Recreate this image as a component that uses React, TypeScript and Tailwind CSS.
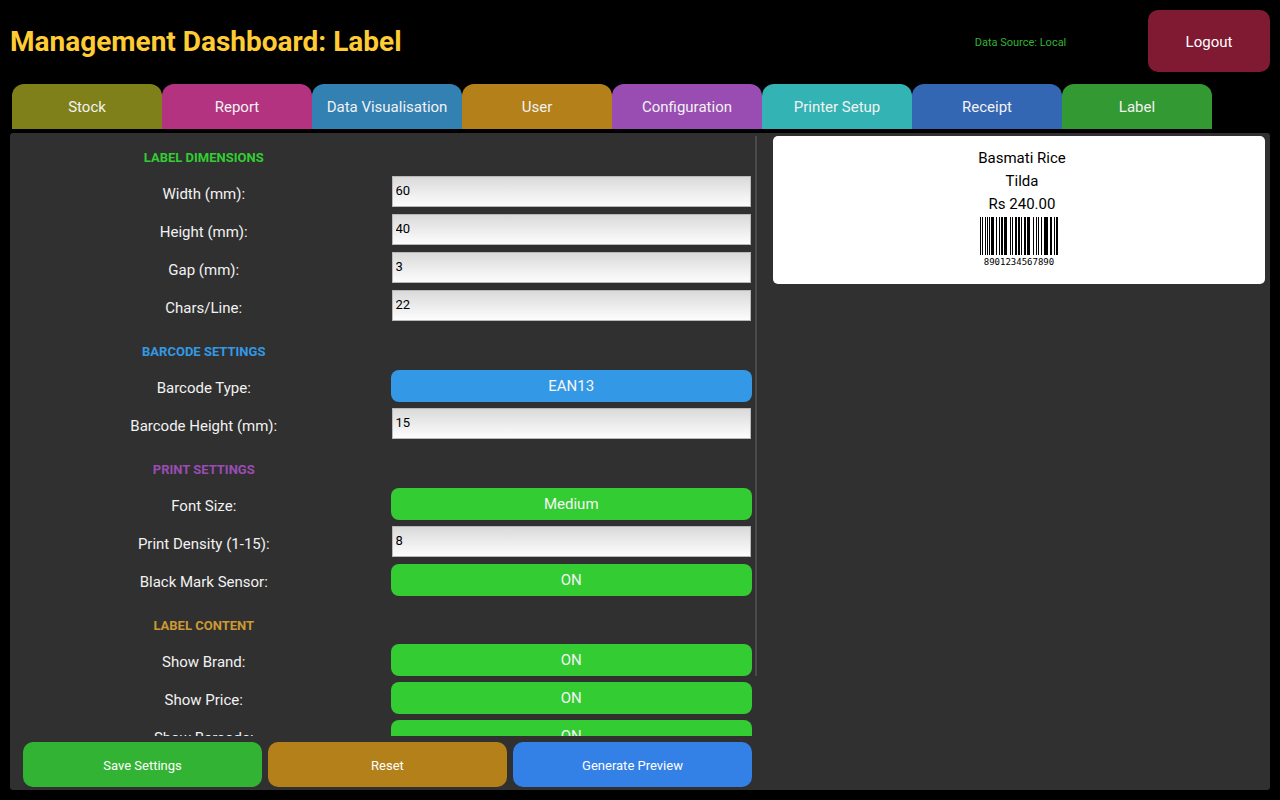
import { useId, useState } from "react";

const tabs = [
    { name: "Stock", color: "bg-[#80801a]" },
    { name: "Report", color: "bg-[#b33380]" },
    { name: "Data Visualisation", color: "bg-[#3380b3]" },
    { name: "User", color: "bg-[#b3801a]" },
    { name: "Configuration", color: "bg-[#994db3]" },
    { name: "Printer Setup", color: "bg-[#33b3b3]" },
    { name: "Receipt", color: "bg-[#3366b3]" },
    { name: "Label", color: "bg-[#339933]" },
];

const SectionTitle = ({ color, children }: { color: string; children: string }) => (
    <div className="grid h-12 grid-cols-2 gap-[6px] pt-3 first:h-10 first:pt-1">
        <h2 className={`flex items-center justify-center text-[13px] font-bold ${color}`}>{children}</h2>
    </div>
);

const Rows = ({ children }: { children: React.ReactNode }) => (
    <div className="flex flex-col gap-[6px]">{children}</div>
);

const Row = ({ id, label, children }: { id: string; label: string; children: React.ReactNode }) => (
    <div className="grid h-8 grid-cols-2 gap-[6px]">
        <label htmlFor={id} className="flex items-center justify-center pt-[5px] text-[15px] text-[#f2f2f2]">
            {label}
        </label>
        {children}
    </div>
);

const TextRow = ({ label, initial }: { label: string; initial: string }) => {
    const id = useId();
    const [value, setValue] = useState(initial);
    return (
        <Row id={id} label={label}>
            <input
                id={id}
                value={value}
                onChange={(e) => setValue(e.target.value)}
                className="mx-px h-[31px] min-w-0 border border-[#b8b8b8] bg-linear-to-b from-[#dadada] to-[#fdfdfd] pb-[2px] pl-[3px] text-[13px] text-black outline-none"
            />
        </Row>
    );
};

const SelectRow = ({
    label,
    options,
    initial,
    color,
}: {
    label: string;
    options: string[];
    initial: string;
    color: string;
}) => {
    const id = useId();
    const [value, setValue] = useState(initial);
    return (
        <Row id={id} label={label}>
            <select
                id={id}
                value={value}
                onChange={(e) => setValue(e.target.value)}
                className={`min-w-0 appearance-none rounded-lg text-center text-[15px] text-[#f5f5f5] [text-align-last:center] ${color}`}
            >
                {options.map((option) => (
                    <option key={option}>{option}</option>
                ))}
            </select>
        </Row>
    );
};

const ToggleRow = ({ label }: { label: string }) => {
    const id = useId();
    const [on, setOn] = useState(true);
    return (
        <Row id={id} label={label}>
            <button
                id={id}
                type="button"
                aria-pressed={on}
                onClick={() => setOn(!on)}
                className={`rounded-lg pt-px text-[15px] text-[#f5f5f5] ${on ? "bg-[#33cc33]" : "bg-[#cc3333]"}`}
            >
                {on ? "ON" : "OFF"}
            </button>
        </Row>
    );
};

const L_CODES = ["0001101", "0011001", "0010011", "0111101", "0100011", "0110001", "0101111", "0111011", "0110111", "0001011"];
const PARITY = ["LLLLLL", "LLGLGG", "LLGGLG", "LLGGGL", "LGLLGG", "LGGLLG", "LGGGLL", "LGLGLG", "LGLGGL", "LGGLGL"];

const invert = (code: string) => code.replace(/./g, (bit) => (bit === "1" ? "0" : "1"));
const reverse = (code: string) => code.split("").reverse().join("");

const ean13 = (value: string) => {
    const digits = value.split("").map(Number);
    const parity = PARITY[digits[0]];
    const left = digits.slice(1, 7).map((d, i) => (parity[i] === "L" ? L_CODES[d] : reverse(invert(L_CODES[d]))));
    const right = digits.slice(7).map((d) => invert(L_CODES[d]));
    return `101${left.join("")}01010${right.join("")}101`;
};

const Barcode = ({ value }: { value: string }) => {
    const bits = ean13(value);
    return (
        <div className="flex flex-col items-center pt-px">
            {/* bars are a little wider than one module so none drops out at this size */}
            <svg width="78" height="38" viewBox="0 0 95 38" preserveAspectRatio="none" shapeRendering="crispEdges">
                {bits.split("").map((bit, i) => bit === "1" && <rect key={i} x={i} width="1.3" height="38" />)}
            </svg>
            <span className="mt-[2px] font-['DejaVu_Sans_Mono',monospace] text-[9px] leading-[10px]">{value}</span>
        </div>
    );
};

const App = () => {
    return (
        <div className="flex h-screen flex-col bg-black px-[10px] py-[10px] font-[Roboto,sans-serif] text-white">
            <header className="flex h-[62px] shrink-0 items-center">
                <h1 className="flex-1 pt-[2px] text-[28px] font-bold text-[#ffcc33]">Management Dashboard: Label</h1>
                <p className="w-[245px] pt-1 text-center text-[11px] text-[#33b333]">Data Source: Local</p>
                <button type="button" className="ml-[5px] h-full w-[122px] rounded-[10px] bg-[#801a33] pt-[2px] text-[15px]">
                    Logout
                </button>
            </header>

            <nav className="mt-3 flex shrink-0 px-[2px]">
                {tabs.map((tab) => (
                    <button
                        key={tab.name}
                        type="button"
                        className={`h-[45px] w-[150px] rounded-t-xl pt-[2px] text-[15px] text-[#f2f2f2] ${tab.color}`}
                    >
                        {tab.name}
                    </button>
                ))}
            </nav>

            <main className="mt-1 grid min-h-0 flex-1 grid-cols-[734fr_492fr] gap-4 rounded-[3px] bg-[#303030] pt-[3px] pr-[5px] pb-[3px] pl-[13px]">
                <div className="flex min-h-0 flex-col gap-[6px]">
                    <div className="flex min-h-0 flex-1 gap-[3px]">
                        <div className="min-w-0 flex-1 overflow-y-auto [scrollbar-width:none]">
                            <SectionTitle color="text-[#33cc33]">LABEL DIMENSIONS</SectionTitle>
                            <Rows>
                                <TextRow label="Width (mm):" initial="60" />
                                <TextRow label="Height (mm):" initial="40" />
                                <TextRow label="Gap (mm):" initial="3" />
                                <TextRow label="Chars/Line:" initial="22" />
                            </Rows>
                            <SectionTitle color="text-[#3399e6]">BARCODE SETTINGS</SectionTitle>
                            <Rows>
                                <SelectRow
                                    label="Barcode Type:"
                                    options={["EAN13", "EAN8", "CODE128"]}
                                    initial="EAN13"
                                    color="bg-[#3399e6]"
                                />
                                <TextRow label="Barcode Height (mm):" initial="15" />
                            </Rows>
                            <SectionTitle color="text-[#994db3]">PRINT SETTINGS</SectionTitle>
                            <Rows>
                                <SelectRow
                                    label="Font Size:"
                                    options={["Small", "Medium", "Large"]}
                                    initial="Medium"
                                    color="bg-[#33cc33]"
                                />
                                <TextRow label="Print Density (1-15):" initial="8" />
                                <ToggleRow label="Black Mark Sensor:" />
                            </Rows>
                            <SectionTitle color="text-[#cc9933]">LABEL CONTENT</SectionTitle>
                            <Rows>
                                <ToggleRow label="Show Brand:" />
                                <ToggleRow label="Show Price:" />
                                <ToggleRow label="Show Barcode:" />
                            </Rows>
                        </div>
                        <div className="h-[90%] w-[2px] bg-[#4a4a4a]" />
                    </div>
                    <div className="mr-[5px] grid h-[45px] shrink-0 grid-cols-3 gap-[6px] text-[13px]">
                        <button type="button" className="rounded-[10px] bg-[#33b333] pt-[2px]">Save Settings</button>
                        <button type="button" className="rounded-[10px] bg-[#b3801a] pt-[2px]">Reset</button>
                        <button type="button" className="rounded-[10px] bg-[#3380e6] pt-[2px]">Generate Preview</button>
                    </div>
                </div>

                <section className="flex h-[148px] flex-col items-center rounded-[5px] bg-white pt-[11px] text-black">
                    <div className="pl-[6px] text-center text-[15px] leading-[23px]">
                        <p>Basmati Rice</p>
                        <p>Tilda</p>
                        <p>Rs 240.00</p>
                    </div>
                    <Barcode value="8901234567890" />
                </section>
            </main>
        </div>
    );
};

export default App;
